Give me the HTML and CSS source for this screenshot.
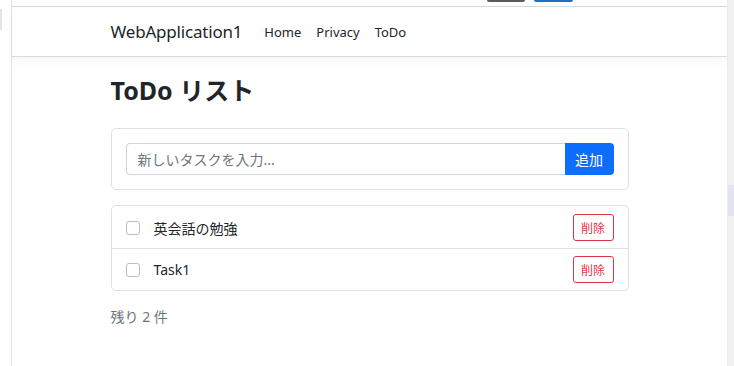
FILE: index.html
```html
<!DOCTYPE html>
<html lang="ja">

<head>
    <meta charset="UTF-8">
    <meta name="viewport" content="width=device-width, initial-scale=1.0">
    <title>ToDo - WebApplication1</title>
    <link rel="stylesheet" href="styles.css">
</head>

<body>

    <div class="side-left">
        <div class="side-tab"></div>
    </div>

    <div class="frame">
        <div class="frame-top">
            <span class="peek peek-gray"></span>
            <span class="peek peek-blue"></span>
        </div>

        <header class="navbar">
            <div class="container nav-inner">
                <a class="brand" href="#">WebApplication1</a>
                <nav class="nav-links">
                    <a href="#">Home</a>
                    <a href="#">Privacy</a>
                    <a href="#">ToDo</a>
                </nav>
            </div>
        </header>

        <main class="container">
            <h1>ToDo リスト</h1>

            <div class="card">
                <form class="input-group">
                    <input type="text" placeholder="新しいタスクを入力...">
                    <button type="button" class="btn-add">追加</button>
                </form>
            </div>

            <ul class="todo-list">
                <li class="todo-item">
                    <span class="check"></span>
                    <span class="todo-text">英会話の勉強</span>
                    <button type="button" class="btn-del">削除</button>
                </li>
                <li class="todo-item">
                    <span class="check"></span>
                    <span class="todo-text">Task1</span>
                    <button type="button" class="btn-del">削除</button>
                </li>
            </ul>

            <p class="remaining">残り 2 件</p>
        </main>
    </div>

    <div class="scrollbar">
        <div class="thumb"></div>
    </div>

</body>

</html>
```

FILE: styles.css
```css
* {
    box-sizing: border-box;
}

html,
body {
    height: 100%;
}

body {
    margin: 0;
    display: flex;
    background-color: #fff;
    color: #212529;
    font-family: "Noto Sans", "Noto Sans CJK JP", sans-serif;
    font-size: 14px;
    overflow: hidden;
}

/* bordes de la ventana */
.side-left {
    width: 11px;
    flex: none;
    padding-top: 9px;
}

.side-tab {
    width: 2px;
    height: 21px;
    background-color: #e4e4e4;
}

.scrollbar {
    width: 6px;
    flex: none;
    background-color: #f1f1f1;
    padding-top: 185px;
}

.thumb {
    height: 31px;
    background-color: #e4e4ee;
}

.frame {
    flex: 1;
    border-left: 1px solid #e2e2e2;
    border-right: 1px solid #ececec;
}

.frame-top {
    height: 7px;
    border-bottom: 1px solid #d9d9d9;
    display: flex;
    padding-left: 475px;
    gap: 9px;
}

.peek {
    height: 2px;
    border-radius: 0 0 2px 2px;
}

.peek-gray {
    width: 38px;
    background-color: #5c5c5c;
}

.peek-blue {
    width: 39px;
    background-color: #1f6fc2;
}

.container {
    width: 518px;
    margin: 0 auto;
}

/* navbar */
.navbar {
    height: 50px;
    border-bottom: 1px solid #dcdcdc;
    box-shadow: 0 4px 10px rgba(0, 0, 0, 0.04);
}

.nav-inner {
    height: 100%;
    display: flex;
    align-items: center;
}

.brand {
    font-size: 17px;
    color: #212529;
    text-decoration: none;
    margin-right: 22px;
    letter-spacing: -0.2px;
}

.nav-links {
    display: flex;
    gap: 15px;
}

.nav-links a {
    color: #212529;
    text-decoration: none;
    font-size: 13px;
}

/* conteudo */
h1 {
    font-size: 25px;
    font-weight: 700;
    line-height: 31px;
    margin: 18px 0 22px;
}

.card {
    border: 1px solid #dee2e6;
    border-radius: 5px;
    padding: 14px;
}

.input-group {
    display: flex;
    margin: 0;
}

.input-group input {
    flex: 1;
    height: 32px;
    border: 1px solid #ced4da;
    border-right: 0;
    border-radius: 4px 0 0 4px;
    padding: 0 11px;
    font-family: inherit;
    font-size: 14px;
    color: #212529;
}

.input-group input::placeholder {
    color: #6c757d;
}

.btn-add {
    width: 49px;
    height: 32px;
    border: 0;
    border-radius: 0 4px 4px 0;
    background-color: #0d6efd;
    color: #fff;
    font-family: inherit;
    font-size: 14px;
}

.todo-list {
    list-style: none;
    margin: 15px 0 0;
    padding: 0;
    border: 1px solid #dee2e6;
    border-radius: 5px;
}

.todo-item {
    display: flex;
    align-items: center;
    padding: 7px 14px;
    border-top: 1px solid #dee2e6;
}

.todo-item:first-child {
    border-top: 0;
    padding-top: 8px;
}

.check {
    width: 14px;
    height: 14px;
    border: 1px solid #b9bec4;
    border-radius: 3px;
    margin-right: 14px;
    flex: none;
}

.todo-text {
    flex: 1;
    font-size: 14px;
}

.btn-del {
    width: 41px;
    height: 27px;
    border: 1px solid #dc3545;
    border-radius: 3px;
    background: #fff;
    color: #dc3545;
    font-family: inherit;
    font-size: 12px;
    padding: 0;
}

.remaining {
    color: #6c757d;
    margin: 15px 0 0;
    line-height: 21px;
}
```
